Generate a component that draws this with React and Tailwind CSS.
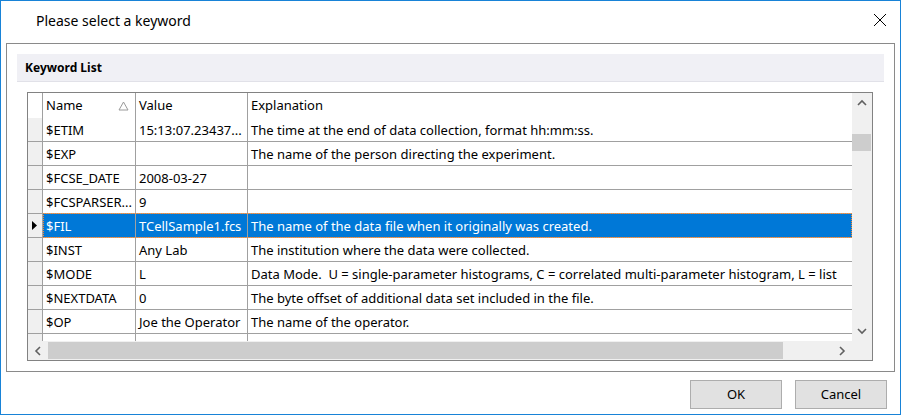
import React from "react";

const rows = [
  { name: "$ETIM", value: "15:13:07.23437...", expl: "The time at the end of data collection, format hh:mm:ss." },
  { name: "$EXP", value: "", expl: "The name of the person directing the experiment." },
  { name: "$FCSE_DATE", value: "2008-03-27", expl: "" },
  { name: "$FCSPARSER...", value: "9", expl: "" },
  { name: "$FIL", value: "TCellSample1.fcs", expl: "The name of the data file when it originally was created.", selected: true },
  { name: "$INST", value: "Any Lab", expl: "The institution where the data were collected." },
  { name: "$MODE", value: "L", expl: "Data Mode.  U = single-parameter histograms, C = correlated multi-parameter histogram, L = list" },
  { name: "$NEXTDATA", value: "0", expl: "The byte offset of additional data set included in the file." },
  { name: "$OP", value: "Joe the Operator", expl: "The name of the operator." },
  { name: "", value: "", expl: "" },
];

function Chevron({ dir }) {
  const paths = {
    up: "M1 6 L5 2 L9 6",
    down: "M1 2 L5 6 L9 2",
    left: "M6 1 L2 5 L6 9",
    right: "M2 1 L6 5 L2 9",
  };
  const vertical = dir === "up" || dir === "down";
  return (
    <svg width={vertical ? 10 : 8} height={vertical ? 8 : 10} viewBox={vertical ? "0 0 10 8" : "0 0 8 10"}>
      <path d={paths[dir]} fill="none" stroke="#606060" strokeWidth="1.6" />
    </svg>
  );
}

function Row({ row }) {
  const sel = row.selected;
  return (
    <div className="relative flex h-[24px] shrink-0 border-b border-[#a0a0a0]">
      <div className="flex w-[15px] shrink-0 items-center justify-center border-r border-[#a0a0a0] bg-[#f0f0f0]">
        {sel ? (
          <svg width="6" height="9" viewBox="0 0 6 9">
            <path d="M0 0 L5 4.5 L0 9 Z" fill="#000" />
          </svg>
        ) : null}
      </div>
      <div className={`relative flex min-w-0 flex-1 ${sel ? "bg-[#0078d7] text-white" : "text-black"}`}>
        <div className="w-[93px] shrink-0 overflow-hidden whitespace-nowrap border-r border-[#a0a0a0] pl-[3px] leading-[24px]">{row.name}</div>
        <div className="w-[112px] shrink-0 overflow-hidden whitespace-nowrap border-r border-[#a0a0a0] pl-[3px] leading-[24px]">{row.value}</div>
        <div className="min-w-0 flex-1 overflow-hidden whitespace-pre pl-[3px] leading-[24px]">{row.expl}</div>
        {sel ? (
          <div className="absolute -top-px right-0 bottom-[-1px] left-0 border border-dotted border-[#ff8728]" />
        ) : null}
      </div>
    </div>
  );
}

export default function App() {
  return (
    <div
      className="flex h-[415px] w-[901px] flex-col border border-[#1883d7] bg-white text-[13px] text-black"
      style={{ fontFamily: '"Noto Sans", "Open Sans", sans-serif' }}
    >
      <div className="flex h-[42px] shrink-0 items-center justify-between pb-[4px] pl-[35px] pr-[13px]">
        <span className="text-[14px]">Please select a keyword</span>
        <svg width="14" height="14" viewBox="0 0 14 14">
          <path d="M1 1 L13 13 M13 1 L1 13" stroke="#000" strokeWidth="1" fill="none" />
        </svg>
      </div>

      <div className="mx-[5px] flex h-[329px] shrink-0 flex-col border border-[#8a8a8a] px-[10px] pt-[10px]">
        <div className="flex h-[28px] shrink-0 items-center border-b border-[#e1e1e8] bg-[#f0f0f5] pl-[8px] text-[12px] font-bold">
          Keyword List
        </div>

        <div className="mt-[10px] mr-[11px] ml-[10px] flex h-[269px] flex-col border border-[#828282]">
          <div className="flex min-h-0 flex-1">
            <div className="flex min-w-0 flex-1 flex-col overflow-hidden">
              <div className="flex h-[25px] shrink-0">
                <div className="w-[15px] shrink-0 border-r border-[#a0a0a0]" />
                <div className="flex w-[93px] shrink-0 items-center justify-between border-r border-[#a0a0a0] pl-[3px] pr-[6px]">
                  <span>Name</span>
                  <svg width="11" height="10" viewBox="0 0 11 10">
                    <path d="M5.5 1 L10 9 L1 9 Z" fill="none" stroke="#9a9a9a" strokeWidth="1" />
                  </svg>
                </div>
                <div className="flex w-[112px] shrink-0 items-center border-r border-[#a0a0a0] pl-[3px]">Value</div>
                <div className="flex flex-1 items-center pl-[3px]">Explanation</div>
              </div>
              {rows.map((r, i) => (
                <Row key={i} row={r} />
              ))}
            </div>
            <div className="flex w-[20px] shrink-0 flex-col bg-[#f0f0f0]">
              <div className="flex h-[20px] items-center justify-center">
                <Chevron dir="up" />
              </div>
              <div className="mt-[21px] h-[17px] w-[19px] bg-[#cdcdcd]" />
              <div className="flex-1" />
              <div className="flex h-[20px] items-center justify-center">
                <Chevron dir="down" />
              </div>
            </div>
          </div>
          <div className="flex h-[19px] shrink-0 bg-[#f0f0f0]">
            <div className="flex w-[20px] items-center justify-center">
              <Chevron dir="left" />
            </div>
            <div className="flex flex-1 py-px">
              <div className="h-full w-[735px] bg-[#cdcdcd]" />
            </div>
            <div className="flex w-[20px] items-center justify-center">
              <Chevron dir="right" />
            </div>
            <div className="w-[20px]" />
          </div>
        </div>
      </div>

      <div className="flex flex-1 items-start justify-end gap-[13px] pt-[8px] pr-[13px]">
        <button className="h-[29px] w-[92px] border border-[#adadad] bg-[#e1e1e1]">OK</button>
        <button className="h-[29px] w-[92px] border border-[#adadad] bg-[#e1e1e1]">Cancel</button>
      </div>
    </div>
  );
}
